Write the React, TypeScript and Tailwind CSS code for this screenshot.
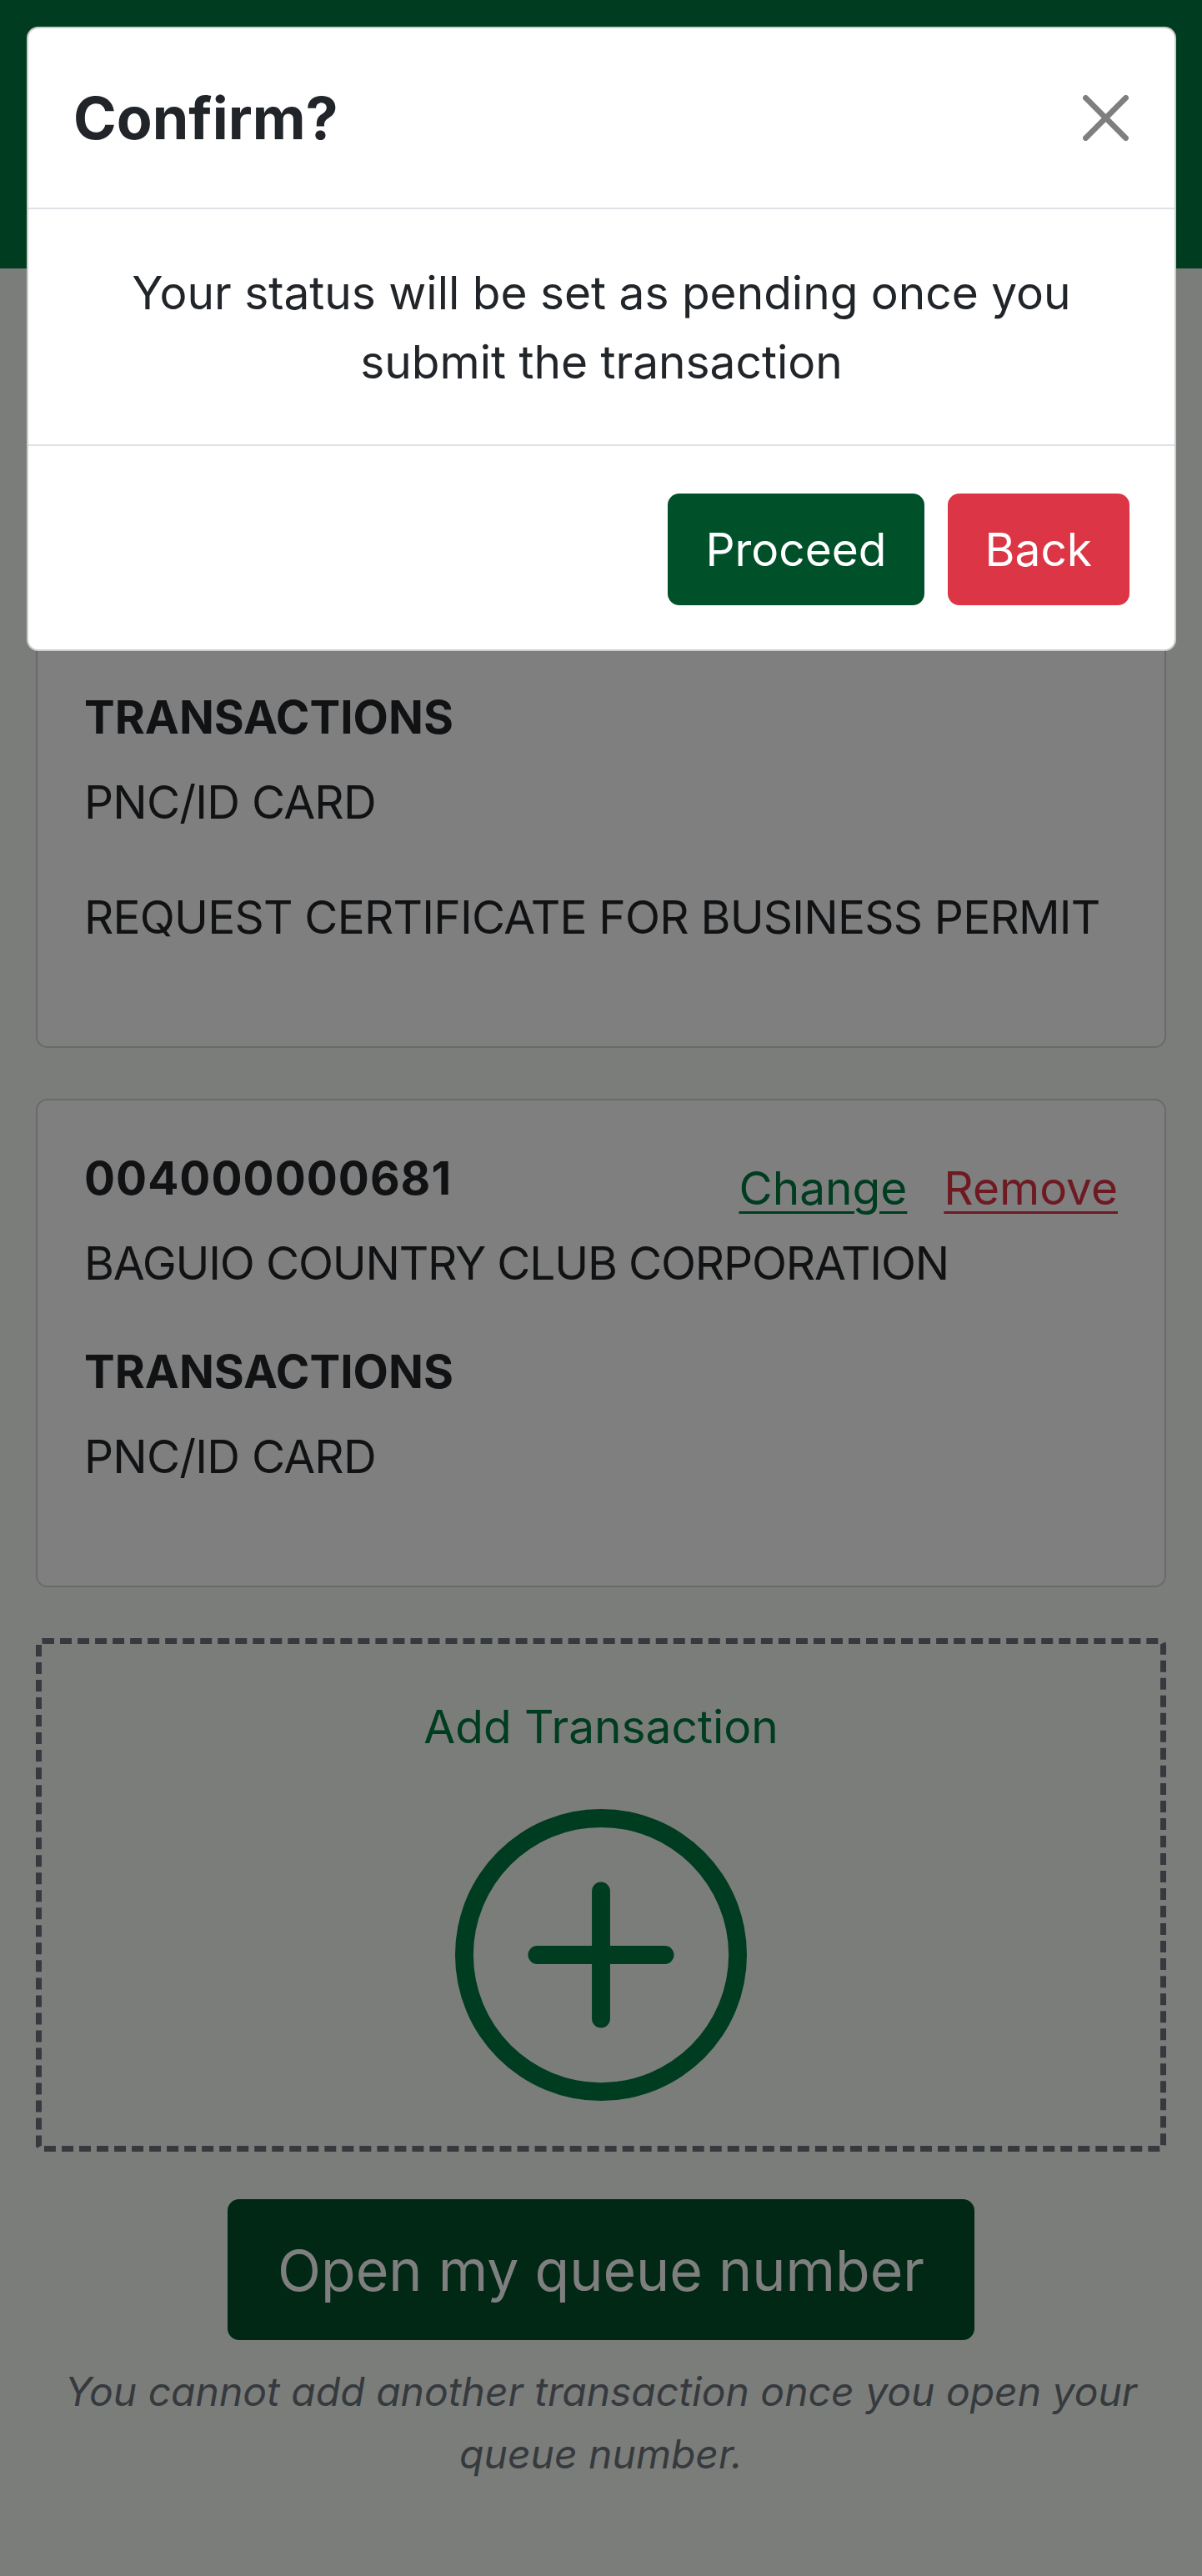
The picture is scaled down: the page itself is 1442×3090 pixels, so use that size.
import { BsPlusCircle } from 'react-icons/bs';

type Account = {
  number: string;
  name: string;
  transactions: string[];
};

const accounts: Account[] = [
  {
    number: '004000000680',
    name: 'BAGUIO COUNTRY CLUB CORPORATION',
    transactions: ['PNC/ID CARD', 'REQUEST CERTIFICATE FOR BUSINESS PERMIT'],
  },
  {
    number: '004000000681',
    name: 'BAGUIO COUNTRY CLUB CORPORATION',
    transactions: ['PNC/ID CARD'],
  },
];

function CloseIcon() {
  return (
    <svg viewBox="0 0 16 16" className="h-[55px] w-[55px]" fill="#000" fillOpacity={0.5}>
      <path d="M.293.293a1 1 0 0 1 1.414 0L8 6.586 14.293.293a1 1 0 1 1 1.414 1.414L9.414 8l6.293 6.293a1 1 0 0 1-1.414 1.414L8 9.414l-6.293 6.293a1 1 0 0 1-1.414-1.414L6.586 8 .293 1.707a1 1 0 0 1 0-1.414z" />
    </svg>
  );
}

function AccountCard({ account }: { account: Account }) {
  return (
    <div className="mb-[61px] rounded-[14px] border-2 border-[#d4d4d4] bg-white px-[56px] pt-[60px] pb-[58px]">
      <div className="flex items-start justify-between">
        <h5 className="mb-[28px] text-[55px] font-bold leading-[66px] tracking-[1px]">{account.number}</h5>
        <div className="mt-[4px] flex gap-[44px] text-[55px] leading-[83px]">
          <a className="text-[#007840] underline decoration-[3px] underline-offset-[8px]">Change</a>
          <a className="text-[#dc3545] underline decoration-[3px] underline-offset-[8px]">Remove</a>
        </div>
      </div>
      <p className="mb-[55px] text-[55px] leading-[83px] tracking-[-1.2px]">{account.name}</p>
      <h6 className="mb-[28px] text-[55px] font-bold leading-[66px]">TRANSACTIONS</h6>
      {account.transactions.map((t) => (
        <p key={t} className="mb-[55px] text-[55px] leading-[83px] tracking-[-0.8px]">
          {t}
        </p>
      ))}
    </div>
  );
}

export default function App() {
  return (
    <div className="min-h-[3090px] bg-[#f6faf4] font-['Inter',sans-serif] text-[#212529]">
      <header className="h-[322px] bg-[#007840]" />

      {/* page behind the open modal */}
      <main className="px-[43px] pt-[211px] pb-[80px]" aria-hidden="true">
        {accounts.map((a) => (
          <AccountCard key={a.number} account={a} />
        ))}

        <div className="flex flex-col items-center rounded-[8px] border-[7px] border-dashed border-[#6c757d] pt-[58px] pb-[54px]">
          <span className="text-[55px] leading-[83px] text-[#007840]">Add Transaction</span>
          <BsPlusCircle className="mt-[57px] h-[350px] w-[350px] text-[#007840]" />
        </div>

        <button className="mx-auto mt-[57px] block h-[169px] rounded-[14px] bg-[#00502a] px-[60px] text-[68px] text-white">
          Open my queue number
        </button>

        <p className="mt-[24px] text-center text-[48px] italic leading-[75px] text-[#6c757d]">
          You cannot add another transaction once you open your queue number.
        </p>
      </main>

      <div className="fixed inset-0 bg-black/50" />

      <div className="fixed left-[32px] top-[32px] w-[1379px] rounded-[14px] border-2 border-black/20 bg-white">
        <div className="flex h-[217px] items-center justify-between border-b-2 border-[#dee2e6] pl-[54px] pr-[55px]">
          <h5 className="text-[70px] font-bold leading-[84px]">Confirm?</h5>
          <button>
            <CloseIcon />
          </button>
        </div>
        <div className="px-[56px] pt-[59px] pb-[57px] text-center text-[55px] leading-[83px]">
          Your status will be set as pending once you submit the transaction
        </div>
        <div className="flex justify-end gap-[28px] border-t-2 border-[#dee2e6] pt-[57px] pr-[54px] pb-[53px]">
          <button className="h-[134px] rounded-[14px] bg-[#00502a] px-[45px] text-[55px] text-white">Proceed</button>
          <button className="h-[134px] rounded-[14px] bg-[#dc3545] px-[45px] text-[55px] text-white">Back</button>
        </div>
      </div>
    </div>
  );
}
